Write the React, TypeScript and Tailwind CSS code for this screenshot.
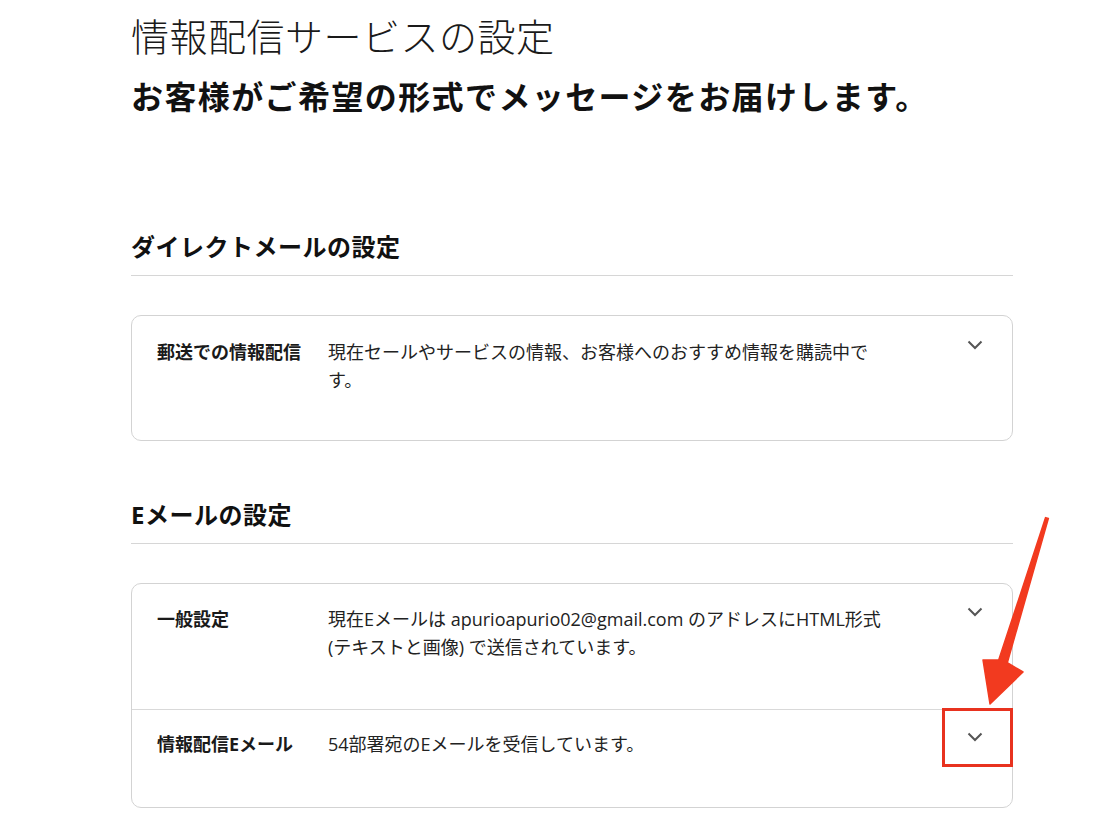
import { ReactNode } from 'react';

function Chevron() {
  return (
    <svg width="16" height="10" viewBox="0 0 16 10" className="mt-[2px] shrink-0">
      <polyline points="1.5,1.5 8,8 14.5,1.5" fill="none" stroke="#555" strokeWidth="2" />
    </svg>
  );
}

function Row({ label, children, className }: { label: string; children: ReactNode; className: string }) {
  return (
    <div className={`flex items-start pl-[25px] pr-[29px] ${className}`}>
      <div className="w-[171px] shrink-0 text-[18px] font-bold leading-[28px] text-[#1a1a1a]">{label}</div>
      <div className="w-[590px] shrink-0 text-[18px] leading-[28px] text-[#222]">{children}</div>
      <div className="flex flex-1 justify-end">
        <Chevron />
      </div>
    </div>
  );
}

export default function App() {
  return (
    <div className="relative h-[836px] w-[1100px] overflow-hidden bg-white font-['Open_Sans','Noto_Sans_CJK_JP',sans-serif]">
      <main className="ml-[131px] w-[882px] pt-[12px]">
        <h1 className="text-[38px] font-light leading-[48px] tracking-[0.5px] text-[#1a1a1a]">
          情報配信サービスの設定
        </h1>
        <p className="mt-[15px] text-[32px] font-bold leading-[44px] tracking-[1.4px] text-[#111]">
          お客様がご希望の形式でメッセージをお届けします。
        </p>

        <h2 className="mt-[112px] border-b border-[#d6d6d6] pb-[12px] text-[24px] font-bold leading-[32px] tracking-[0.5px] text-[#111]">
          ダイレクトメールの設定
        </h2>
        <section className="mt-[39px] h-[126px] rounded-[10px] border border-[#d3d3d3]">
          <Row label="郵送での情報配信" className="pt-[22px]">
            現在セールやサービスの情報、お客様へのおすすめ情報を購読中で
            <br />
            す。
          </Row>
        </section>

        <h2 className="mt-[58px] border-b border-[#d6d6d6] pb-[12px] text-[24px] font-bold leading-[32px] tracking-[0.5px] text-[#111]">
          Eメールの設定
        </h2>
        <section className="mt-[39px] rounded-[10px] border border-[#d3d3d3]">
          <Row label="一般設定" className="h-[126px] border-b border-[#d9d9d9] pt-[21px]">
            現在Eメールは apurioapurio02@gmail.com のアドレスにHTML形式
            <br />
            (テキストと画像) で送信されています。
          </Row>
          <Row label="情報配信Eメール" className="h-[97px] pt-[20px]">
            54部署宛のEメールを受信しています。
          </Row>
        </section>
      </main>

      <svg className="pointer-events-none absolute left-0 top-0" width="1100" height="836" viewBox="0 0 1100 836">
        <rect x="943.5" y="709.5" width="68" height="56" fill="none" stroke="#e8321f" strokeWidth="3" />
        <polygon
          points="1048.4,518.4 1007.3,662.7 1023,672 990,704 983,660 998.7,660.1 1045.6,517.6"
          fill="#f23a1f"
          stroke="#f23a1f"
          strokeWidth="1.5"
          strokeLinejoin="round"
        />
      </svg>
    </div>
  );
}
